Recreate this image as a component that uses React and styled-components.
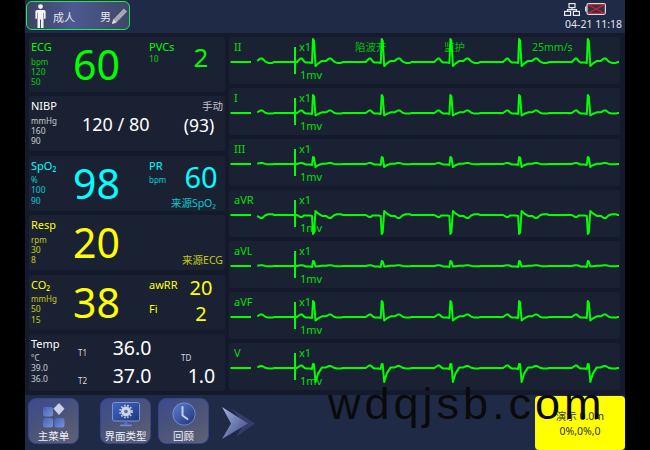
import React from 'react';
import styled, { createGlobalStyle } from 'styled-components';

const GREEN = '#00ff00';
const CYAN = '#00ffff';
const YELLOW = '#ffff00';
const WHITE = '#ffffff';

const GlobalStyle = createGlobalStyle`
	html, body {
		margin: 0;
		padding: 0;
		background: #000;
	}
	* {
		box-sizing: border-box;
	}
`

const Page = styled.div`
	position: relative;
	width: 650px;
	height: 450px;
	padding: 0 25px;
	background: #000;
	overflow: hidden;
	font-family: "Noto Sans", "Noto Sans CJK SC", sans-serif;
`

const Screen = styled.div`
	width: 600px;
	height: 450px;
	display: flex;
	flex-direction: column;
	background: #141a2b;
`

const TopBar = styled.div`
	height: 33px;
	display: flex;
	justify-content: space-between;
	padding: 1px 3px 0 1px;
	background: #1f2a47;
`

const PatientPill = styled.div`
	width: 104px;
	height: 29px;
	display: flex;
	align-items: center;
	padding: 0 1px 0 8px;
	border: 1.5px solid #1fe860;
	border-radius: 6px;
	background: linear-gradient(90deg, #3b4460 0%, #4c5a92 45%, #3f4766 100%);
	color: #e4e6ee;
	font-size: 11px;
`

const PatientType = styled.span`
	margin-left: 7px;
	flex: 1;
	padding-top: 3px;
`

const PatientSex = styled.span`
	padding-top: 1px;
`

const StatusArea = styled.div`
	display: flex;
	flex-direction: column;
	align-items: flex-end;
	color: #e2e4ea;
	font-size: 10.5px;
	line-height: 13px;
`

const StatusIcons = styled.div`
	display: flex;
	gap: 5px;
	margin: 2px 16px 2px 0;
`

const Main = styled.div`
	height: 362px;
	display: grid;
	grid-template-columns: 196px 391px;
	gap: 4px;
	padding: 4px 0 0 4px;
`

const VitalsColumn = styled.div`
	display: grid;
	grid-template-rows: 55px 55px 55px 55px 55px 57px;
	row-gap: 4.4px;
`

const WavesColumn = styled.div`
	display: grid;
	grid-template-rows: repeat(7, 47px);
	row-gap: 4px;
`

const Panel = styled.div`
	display: grid;
	grid-template-columns: 44px 74px 76px;
	padding-left: 2px;
	border-radius: 3px;
	background: #1a2133;
	color: ${(p) => p.$color};
`

const LeftCol = styled.div`
	display: flex;
	flex-direction: column;
	padding-top: 3px;
`

const Label = styled.div`
	font-size: 11px;
	line-height: 14px;
`

const Unit = styled.div`
	margin-top: 1.5px;
	font-size: 8px;
	line-height: 11px;
	opacity: 0.75;
`

const Limit = styled.div`
	font-size: 8.5px;
	line-height: 10.5px;
	opacity: 0.75;
`

const BigValue = styled.div`
	margin-left: -2px;
	font-size: 41px;
	line-height: 55px;
`

const SideCol = styled.div`
	display: flex;
	flex-direction: column;
`

const SideRow = styled.div`
	display: flex;
	height: ${(p) => p.$height}px;
`

const SideLabels = styled.div`
	width: 36px;
	padding-top: ${(p) => p.$pad ?? 3}px;
`

const SideValue = styled.div`
	width: 32px;
	text-align: center;
	font-size: ${(p) => p.$size}px;
	line-height: ${(p) => p.$height}px;
	white-space: nowrap;
	display: flex;
	justify-content: center;
`

const Source = styled.div`
	margin-top: ${(p) => p.$top}px;
	padding-right: ${(p) => p.$right}px;
	text-align: right;
	font-size: 10.5px;
	line-height: 13px;
	opacity: 0.75;
`

const Pressure = styled.div`
	font-size: 18px;
	line-height: 56px;
	white-space: nowrap;
	padding-left: 7px;
`

const NibpMode = styled.div`
	padding: 3px 2px 0 0;
	text-align: right;
	font-size: 10.5px;
	line-height: 14px;
	color: #c2c4ca;
`

const NibpMean = styled.div`
	width: 100px;
	text-align: center;
	font-size: 17.5px;
	line-height: 24px;
`

const TempGrid = styled.div`
	grid-column: 2 / 4;
	display: grid;
	grid-template-columns: 35px 44px 24px 47px;
	grid-template-rows: 28px 29px;
	align-items: center;
`

const TempTag = styled.div`
	padding: ${(p) => p.$shift}px 0 0 3px;
	font-size: 8px;
	line-height: 10px;
	color: #d8dae0;
`

const TempValue = styled.div`
	font-size: 19.5px;
	line-height: 26px;
	text-align: center;
	white-space: nowrap;
`

const WaveRow = styled.div`
	position: relative;
	border-radius: 3px;
	background: #1a2133;
`

const WaveSvg = styled.svg`
	position: absolute;
	inset: 0;
	display: block;
`

const WaveText = styled.span`
	position: absolute;
	left: ${(p) => p.$x}px;
	top: ${(p) => p.$y}px;
	font-size: ${(p) => p.$size || 11}px;
	line-height: 14px;
	color: ${(p) => p.$color || '#00e000'};
	white-space: nowrap;
`

const BottomBar = styled.div`
	flex: 1;
	display: flex;
	padding: 3px 0 0 3px;
	background: #1f2a47;
`

const NavButton = styled.div`
	width: 51px;
	height: 46px;
	margin-right: ${(p) => p.$gap}px;
	display: flex;
	flex-direction: column;
	align-items: center;
	padding-top: 3px;
	border: 1px solid #34458c;
	border-radius: 8px;
	background: linear-gradient(150deg, #3b4a8e 0%, #4c5478 50%, #5f6274 100%);
	color: #eef0f6;
	font-size: 10.5px;
	line-height: 13px;
`

const NavIcon = styled.svg`
	display: block;
	height: 26px;
	margin-bottom: 1.5px;
	flex: none;
`

const ArrowIcon = styled.svg`
	display: block;
	margin: 9px 0 0 6px;
	flex: none;
`

const DemoBox = styled.div`
	width: 90px;
	height: 54px;
	margin: -2px 0 0 auto;
	padding-top: 13px;
	border-radius: 4px;
	background: ${YELLOW};
	color: #333;
	text-align: center;
	font-size: 10.5px;
	line-height: 15px;
`

const Watermark = styled.div`
	position: absolute;
	left: 328px;
	top: 378px;
	font-family: "Liberation Sans", sans-serif;
	font-size: 45px;
	line-height: 52px;
	letter-spacing: 4px;
	color: #0a0a0a;
	white-space: nowrap;
`

const BEAT = (l) => [
	[-16, 0], [-14, -0.6 * l.p], [-12.5, -l.p], [-11, -l.p], [-9, -0.2 * l.p], [-7, 0.6], [-3, 0.6],
	[-1, 1], [0, -l.r], [1, -l.r * 0.92], [2.5, l.s], [5, l.s * 0.4], [9, -0.3 * l.t], [13, -0.3 * l.t],
	[16, -l.t], [18, -l.t], [21, -0.1 * l.t], [24, 0.25 * l.t], [28, 0.25 * l.t], [30, 0],
];

// rows start at x=229, first R peak sits at x=84, one beat every 68.7px
const wavePath = (lead) => {
	const base = 25;
	let d = '';
	for (let i = -1; i < 5; i++) {
		const R = 84 + i * 68.7;
		BEAT(lead).forEach(([dx, dy]) => {
			const x = R + dx;
			if (x < 28 || x > 390) return;
			d += `${d ? 'L' : 'M'}${x.toFixed(1)} ${(base + dy).toFixed(1)}`;
		});
		if (R + 30 < 390) d += `L${Math.min(R + 52, 390).toFixed(1)} ${base}`;
	}
	return d;
};

const LEADS = [
	{ name: 'II', p: 3.5, r: 23, s: 4, t: 3.5 },
	{ name: 'I', p: 2.5, r: 18, s: 2.5, t: 2.5 },
	{ name: 'III', p: 1, r: 7, s: 3, t: 1 },
	{ name: 'aVR', p: -2, r: -19, s: -4, t: -3 },
	{ name: 'aVL', p: 0.8, r: 5, s: 0.5, t: 0.8 },
	{ name: 'aVF', p: 2.5, r: 16, s: 3.5, t: 2.5 },
	{ name: 'V', p: 2.5, r: 4, s: 14, t: 2 },
];

const Lead = ({ lead, top }) => (
	<WaveRow>
		<WaveText $x={5} $y={3}>{lead.name}</WaveText>
		<WaveText $x={70} $y={3}>x1</WaveText>
		<WaveText $x={71} $y={31}>1mv</WaveText>
		{top && <>
			<WaveText $x={126} $y={3} $size={10.5} $color="#00c000">陷波开</WaveText>
			<WaveText $x={215} $y={3} $size={10.5} $color="#00c000">监护</WaveText>
			<WaveText $x={303} $y={3} $size={10.5} $color="#00d000">25mm/s</WaveText>
		</>}
		<WaveSvg width="391" height="47" viewBox="0 0 391 47" fill="none">
			<path d="M1.5 25H22" stroke={GREEN} strokeWidth="2" />
			<path d="M66 10V37" stroke={GREEN} strokeWidth="2" />
			<path d={wavePath(lead)} stroke={GREEN} strokeWidth="2" strokeLinejoin="round" />
		</WaveSvg>
	</WaveRow>
);

const LeftInfo = ({ label, unit, high, low }) => (
	<LeftCol>
		<Label>{label}</Label>
		<Unit>{unit}</Unit>
		<Limit>{high}</Limit>
		<Limit>{low}</Limit>
	</LeftCol>
);

const PersonIcon = () => (
	<svg width="11" height="24" viewBox="0 0 11 24">
		<circle cx="5.5" cy="2.6" r="2.4" fill="#f2f4f8" />
		<path d="M1.8 6h7.4L10.6 7v7.8H9v-6l-.5 0V24H6V15.5H5V24H2.5V8.8L2 8.8v6H.4V7z" fill="#f2f4f8" />
	</svg>
);

const PencilIcon = () => (
	<svg width="17" height="18" viewBox="0 0 17 18">
		<path d="M1 17l1.2-4.6L12.8 1.4l3.3 3.1L5.5 15.6z" fill="#a6a9b2" />
		<path d="M1 17l1.2-4.6 3.3 3.2z" fill="#d8dae0" />
	</svg>
);

const NetworkIcon = () => (
	<svg width="16" height="13" viewBox="0 0 16 13" fill="none" stroke="#e6e8ee" strokeWidth="1.2">
		<rect x="5" y="0.6" width="6" height="4" />
		<rect x="0.6" y="8.4" width="6" height="4" />
		<rect x="9.4" y="8.4" width="6" height="4" />
		<path d="M8 4.6v2H3.6v1.8M8 6.6h4.4v1.8" />
	</svg>
);

const BatteryIcon = () => (
	<svg width="21" height="12" viewBox="0 0 21 12" fill="none">
		<rect x="0" y="3.5" width="1.6" height="5" fill="#d8dae0" />
		<rect x="2" y="0.7" width="18.4" height="10.6" rx="1.5" fill="#2a3350" stroke="#d8dae0" strokeWidth="1.2" />
		<path d="M3 1.8L19.5 10.2M19.5 1.8L3 10.2" stroke="#f01818" strokeWidth="1.1" />
		<path d="M3 1.8H19.5M3 10.2H19.5" stroke="#f01818" strokeWidth="0.8" />
	</svg>
);

const MenuIcon = () => (
	<NavIcon width="26" height="26" viewBox="0 0 26 26">
		<defs>
			<linearGradient id="tile" x1="0" y1="0" x2="1" y2="1">
				<stop offset="0" stopColor="#3f62c4" />
				<stop offset="1" stopColor="#7f93cc" />
			</linearGradient>
		</defs>
		<rect x="2" y="5" width="10" height="9.5" rx="2.5" fill="url(#tile)" />
		<rect x="2" y="16" width="10" height="9.5" rx="2.5" fill="url(#tile)" />
		<rect x="13.5" y="16" width="10" height="9.5" rx="2.5" fill="url(#tile)" />
		<path d="M18 1l5.5 5.8L18 13l-5.5-6.2z" fill="#c9d2ea" />
	</NavIcon>
);

const MonitorIcon = () => (
	<NavIcon width="28" height="26" viewBox="0 0 28 26">
		<defs>
			<linearGradient id="scr" x1="0" y1="0" x2="1" y2="1">
				<stop offset="0" stopColor="#3f66c8" />
				<stop offset="1" stopColor="#20387c" />
			</linearGradient>
		</defs>
		<rect x="0.5" y="0.5" width="27" height="18.5" rx="2" fill="url(#scr)" stroke="#7c93d2" />
		<path d="M12.5 19h3v3.5h-3z" fill="#5570b8" />
		<rect x="8" y="22.5" width="12" height="1.8" rx="0.9" fill="#6f88c8" />
		<circle cx="14" cy="9.5" r="5" fill="#cdd4e6" />
		<circle cx="14" cy="9.5" r="6" fill="none" stroke="#cdd4e6" strokeWidth="1.6" strokeDasharray="1.6 1.6" />
		<circle cx="14" cy="9.5" r="1.8" fill="#5a6a98" />
	</NavIcon>
);

const ClockIcon = () => (
	<NavIcon width="24" height="26" viewBox="0 0 24 26">
		<defs>
			<linearGradient id="dial" x1="0" y1="0" x2="1" y2="1">
				<stop offset="0" stopColor="#5c7fd8" />
				<stop offset="1" stopColor="#1f3274" />
			</linearGradient>
		</defs>
		<circle cx="12" cy="12" r="11.2" fill="url(#dial)" stroke="#7f96d4" strokeWidth="0.8" />
		<path d="M10.5 5v8.5l5 3.5" fill="none" stroke="#c3cfee" strokeWidth="2" strokeLinecap="round" strokeLinejoin="round" />
	</NavIcon>
);

const NextArrow = () => (
	<ArrowIcon width="34" height="33" viewBox="0 0 34 33">
		<defs>
			<linearGradient id="arrow" x1="0" y1="0" x2="1" y2="1">
				<stop offset="0" stopColor="#a4b2e0" />
				<stop offset="1" stopColor="#3a4680" />
			</linearGradient>
		</defs>
		<path d="M9 1l24 15.5L14 30l8-13.5z" fill="#333d68" />
		<path d="M0 0l26 16.5L0 32l9-15.5z" fill="url(#arrow)" />
	</ArrowIcon>
);

const App = () => {
	return (
		<Page>
			<GlobalStyle />
			<Screen>
				<TopBar>
					<PatientPill>
						<PersonIcon />
						<PatientType>成人</PatientType>
						<PatientSex>男</PatientSex>
						<PencilIcon />
					</PatientPill>
					<StatusArea>
						<StatusIcons>
							<NetworkIcon />
							<BatteryIcon />
						</StatusIcons>
						04-21 11:18
					</StatusArea>
				</TopBar>
				<Main>
					<VitalsColumn>
						<Panel $color={GREEN}>
							<LeftInfo label="ECG" unit="bpm" high="120" low="50" />
							<BigValue>60</BigValue>
							<SideCol>
								<SideRow $height={40}>
									<SideLabels>
										<Label>PVCs</Label>
										<Limit>10</Limit>
									</SideLabels>
									<SideValue $size={26} $height={40}>2</SideValue>
								</SideRow>
							</SideCol>
						</Panel>
						<Panel $color={WHITE}>
							<LeftInfo label="NIBP" unit="mmHg" high="160" low="90" />
							<Pressure>120 / 80</Pressure>
							<SideCol>
								<NibpMode>手动</NibpMode>
								<NibpMean>(93)</NibpMean>
							</SideCol>
						</Panel>
						<Panel $color={CYAN}>
							<LeftInfo label="SpO₂" unit="%" high="100" low="90" />
							<BigValue>98</BigValue>
							<SideCol>
								<SideRow $height={41}>
									<SideLabels>
										<Label>PR</Label>
										<Unit>bpm</Unit>
									</SideLabels>
									<SideValue $size={29} $height={42}>60</SideValue>
								</SideRow>
								<Source $top={0} $right={9}>来源SpO₂</Source>
							</SideCol>
						</Panel>
						<Panel $color={YELLOW}>
							<LeftInfo label="Resp" unit="rpm" high="30" low="8" />
							<BigValue>20</BigValue>
							<SideCol>
								<Source $top={39} $right={2}>来源ECG</Source>
							</SideCol>
						</Panel>
						<Panel $color={YELLOW}>
							<LeftInfo label="CO₂" unit="mmHg" high="50" low="15" />
							<BigValue>38</BigValue>
							<SideCol>
								<SideRow $height={26}>
									<SideLabels>
										<Label>awRR</Label>
									</SideLabels>
									<SideValue $size={20} $height={26}>20</SideValue>
								</SideRow>
								<SideRow $height={26}>
									<SideLabels $pad={1}>
										<Label>Fi</Label>
									</SideLabels>
									<SideValue $size={20} $height={26}>2</SideValue>
								</SideRow>
							</SideCol>
						</Panel>
						<Panel $color={WHITE}>
							<LeftInfo label="Temp" unit="°C" high="39.0" low="36.0" />
							<TempGrid>
								<TempTag $shift={10}>T1</TempTag>
								<TempValue>36.0</TempValue>
								<span />
								<TempTag $shift={20}>TD</TempTag>
								<TempTag $shift={10}>T2</TempTag>
								<TempValue>37.0</TempValue>
								<span />
								<TempValue>1.0</TempValue>
							</TempGrid>
						</Panel>
					</VitalsColumn>
					<WavesColumn>
						{LEADS.map((lead, i) => (
							<Lead key={lead.name} lead={lead} top={i === 0} />
						))}
					</WavesColumn>
				</Main>
				<BottomBar>
					<NavButton $gap={21}>
						<MenuIcon />
						主菜单
					</NavButton>
					<NavButton $gap={7}>
						<MonitorIcon />
						界面类型
					</NavButton>
					<NavButton $gap={7}>
						<ClockIcon />
						回顾
					</NavButton>
					<NextArrow />
					<DemoBox>
						演示 0.0m
						<br />
						0%,0%,0
					</DemoBox>
				</BottomBar>
			</Screen>
			<Watermark>wdqjsb.com</Watermark>
		</Page>
	)
}

export default App;
